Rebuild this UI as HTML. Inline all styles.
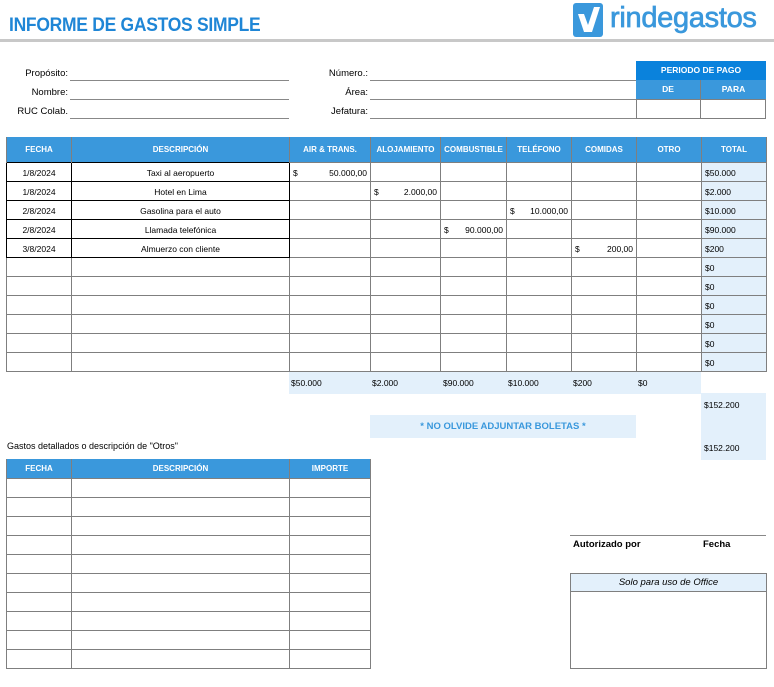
<!DOCTYPE html>
<html><head><meta charset="utf-8"><style>
*{margin:0;padding:0;box-sizing:border-box}
body{width:774px;height:687px;background:#fff;position:relative;font-family:"Liberation Sans",sans-serif;overflow:hidden;color:#000}
.a{position:absolute}
.title{left:9px;top:15px;font-size:19px;font-weight:bold;color:#1f86d6;letter-spacing:-0.3px;transform:scaleX(0.92);transform-origin:left}
.rule{left:0;top:39px;width:774px;height:3px;background:#c8c8c8}
.lbl{font-size:9.5px;text-align:right;width:60px}
.line{height:1px;background:#888}
table{border-collapse:collapse;position:absolute;table-layout:fixed}
td{border:1px solid #7f7f7f;font-size:8.5px;padding:3px 3px 0;white-space:nowrap;overflow:hidden}
th{background:#3a98dc;color:#fff;font-size:8px;font-weight:bold;border:1px solid #7f7f7f;border-top:none;border-bottom:none}
.b td.k{border:1px solid #000}
.c{text-align:center}
.tot{background:#e3f0fb}
.m{display:flex;justify-content:space-between}
</style></head><body>
<div class="a title">INFORME DE GASTOS SIMPLE</div>
<div class="a rule"></div>
<svg class="a" style="left:573px;top:3px" width="30" height="34" viewBox="0 0 30 34"><rect x="0" y="0" width="30" height="34" rx="3" fill="#3a98dc"/><path d="M5 11 L11 11 L15 22 L21 4 L27 4 L19 29 L11 29 Z" fill="#fff"/></svg>
<div class="a" style="left:610px;top:2px;font-size:29px;color:#3a98dc;-webkit-text-stroke:0.7px #3a98dc;letter-spacing:-0.3px">rindegastos</div>

<div class="a lbl" style="left:8px;top:68px">Propósito:</div><div class="a line" style="left:70px;top:80px;width:219px"></div>
<div class="a lbl" style="left:8px;top:87px">Nombre:</div><div class="a line" style="left:70px;top:99px;width:219px"></div>
<div class="a lbl" style="left:8px;top:106px">RUC Colab.</div><div class="a line" style="left:70px;top:118px;width:219px"></div>
<div class="a lbl" style="left:308px;top:68px">Número.:</div><div class="a line" style="left:370px;top:80px;width:266px"></div>
<div class="a lbl" style="left:308px;top:87px">Área:</div><div class="a line" style="left:370px;top:99px;width:266px"></div>
<div class="a lbl" style="left:308px;top:106px">Jefatura:</div><div class="a line" style="left:370px;top:118px;width:266px"></div>

<div class="a" style="left:636px;top:61px;width:130px;height:19px;background:#0a82dc;color:#fff;font-size:8.5px;font-weight:bold;text-align:center;line-height:19px">PERIODO DE PAGO</div>
<div class="a" style="left:636px;top:80px;width:65px;height:19px;background:#3a98dc;color:#fff;font-size:8.5px;font-weight:bold;text-align:center;line-height:19px;border-right:1px solid #7f7f7f">DE</div>
<div class="a" style="left:701px;top:80px;width:65px;height:19px;background:#3a98dc;color:#fff;font-size:8.5px;font-weight:bold;text-align:center;line-height:19px">PARA</div>
<div class="a" style="left:636px;top:99px;width:130px;height:20px;border:1px solid #7f7f7f"></div>
<div class="a" style="left:700px;top:99px;width:1px;height:20px;background:#7f7f7f"></div>

<table style="left:6px;top:137px;width:760px">
<colgroup><col style="width:65px"><col style="width:218px"><col style="width:81px"><col style="width:70px"><col style="width:66px"><col style="width:65px"><col style="width:65px"><col style="width:65px"><col style="width:65px"></colgroup>
<tr style="height:25px"><th>FECHA</th><th>DESCRIPCIÓN</th><th>AIR &amp; TRANS.</th><th>ALOJAMIENTO</th><th>COMBUSTIBLE</th><th>TELÉFONO</th><th>COMIDAS</th><th>OTRO</th><th>TOTAL</th></tr>
<tr class="b" style="height:19px"><td class="k c">1/8/2024</td><td class="k c">Taxi al aeropuerto</td><td><div class="m"><span>$</span><span>50.000,00</span></div></td><td></td><td></td><td></td><td></td><td></td><td class="tot">$50.000</td></tr>
<tr class="b" style="height:19px"><td class="k c">1/8/2024</td><td class="k c">Hotel en Lima</td><td></td><td><div class="m"><span>$</span><span>2.000,00</span></div></td><td></td><td></td><td></td><td></td><td class="tot">$2.000</td></tr>
<tr class="b" style="height:19px"><td class="k c">2/8/2024</td><td class="k c">Gasolina para el auto</td><td></td><td></td><td></td><td><div class="m"><span>$</span><span>10.000,00</span></div></td><td></td><td></td><td class="tot">$10.000</td></tr>
<tr class="b" style="height:19px"><td class="k c">2/8/2024</td><td class="k c">Llamada telefónica</td><td></td><td></td><td><div class="m"><span>$</span><span>90.000,00</span></div></td><td></td><td></td><td></td><td class="tot">$90.000</td></tr>
<tr class="b" style="height:19px"><td class="k c">3/8/2024</td><td class="k c">Almuerzo con cliente</td><td></td><td></td><td></td><td></td><td><div class="m"><span>$</span><span>200,00</span></div></td><td></td><td class="tot">$200</td></tr>
<tr style="height:19px"><td></td><td></td><td></td><td></td><td></td><td></td><td></td><td></td><td class="tot">$0</td></tr>
<tr style="height:19px"><td></td><td></td><td></td><td></td><td></td><td></td><td></td><td></td><td class="tot">$0</td></tr>
<tr style="height:19px"><td></td><td></td><td></td><td></td><td></td><td></td><td></td><td></td><td class="tot">$0</td></tr>
<tr style="height:19px"><td></td><td></td><td></td><td></td><td></td><td></td><td></td><td></td><td class="tot">$0</td></tr>
<tr style="height:19px"><td></td><td></td><td></td><td></td><td></td><td></td><td></td><td></td><td class="tot">$0</td></tr>
<tr style="height:19px"><td></td><td></td><td></td><td></td><td></td><td></td><td></td><td></td><td class="tot">$0</td></tr>
</table>

<div class="a tot" style="left:289px;top:372px;width:412px;height:22px;font-size:8.5px;line-height:22px">
<span class="a" style="left:2px">$50.000</span><span class="a" style="left:83px">$2.000</span><span class="a" style="left:154px">$90.000</span><span class="a" style="left:219px">$10.000</span><span class="a" style="left:284px">$200</span><span class="a" style="left:349px">$0</span></div>
<div class="a tot" style="left:701px;top:393px;width:65px;height:67px;font-size:8.5px"><div style="padding:2px 3px;margin-top:5px">$152.200</div><div style="padding:0 3px;margin-top:31px">$152.200</div></div>
<div class="a tot" style="left:370px;top:415px;width:266px;height:23px;color:#3a98dc;font-size:9.5px;font-weight:bold;text-align:center;line-height:23px">* NO OLVIDE ADJUNTAR BOLETAS *</div>

<div class="a" style="left:7px;top:441px;font-size:9px">Gastos detallados o descripción de "Otros"</div>
<table style="left:6px;top:459px;width:364px">
<colgroup><col style="width:65px"><col style="width:218px"><col style="width:81px"></colgroup>
<tr style="height:19px"><th>FECHA</th><th>DESCRIPCIÓN</th><th>IMPORTE</th></tr>
<tr style="height:19px"><td></td><td></td><td></td></tr><tr style="height:19px"><td></td><td></td><td></td></tr><tr style="height:19px"><td></td><td></td><td></td></tr><tr style="height:19px"><td></td><td></td><td></td></tr><tr style="height:19px"><td></td><td></td><td></td></tr><tr style="height:19px"><td></td><td></td><td></td></tr><tr style="height:19px"><td></td><td></td><td></td></tr><tr style="height:19px"><td></td><td></td><td></td></tr><tr style="height:19px"><td></td><td></td><td></td></tr><tr style="height:19px"><td></td><td></td><td></td></tr>
</table>

<div class="a line" style="left:570px;top:535px;width:196px"></div>
<div class="a" style="left:573px;top:539px;font-size:9.5px;font-weight:bold">Autorizado por</div>
<div class="a" style="left:703px;top:539px;font-size:9.5px;font-weight:bold">Fecha</div>
<div class="a" style="left:570px;top:573px;width:197px;height:96px;border:1px solid #7f7f7f"></div>
<div class="a tot" style="left:571px;top:574px;width:195px;height:18px;border-bottom:1px solid #7f7f7f;font-size:9.5px;font-style:italic;text-align:center;line-height:17px">Solo para uso de Office</div>
</body></html>
